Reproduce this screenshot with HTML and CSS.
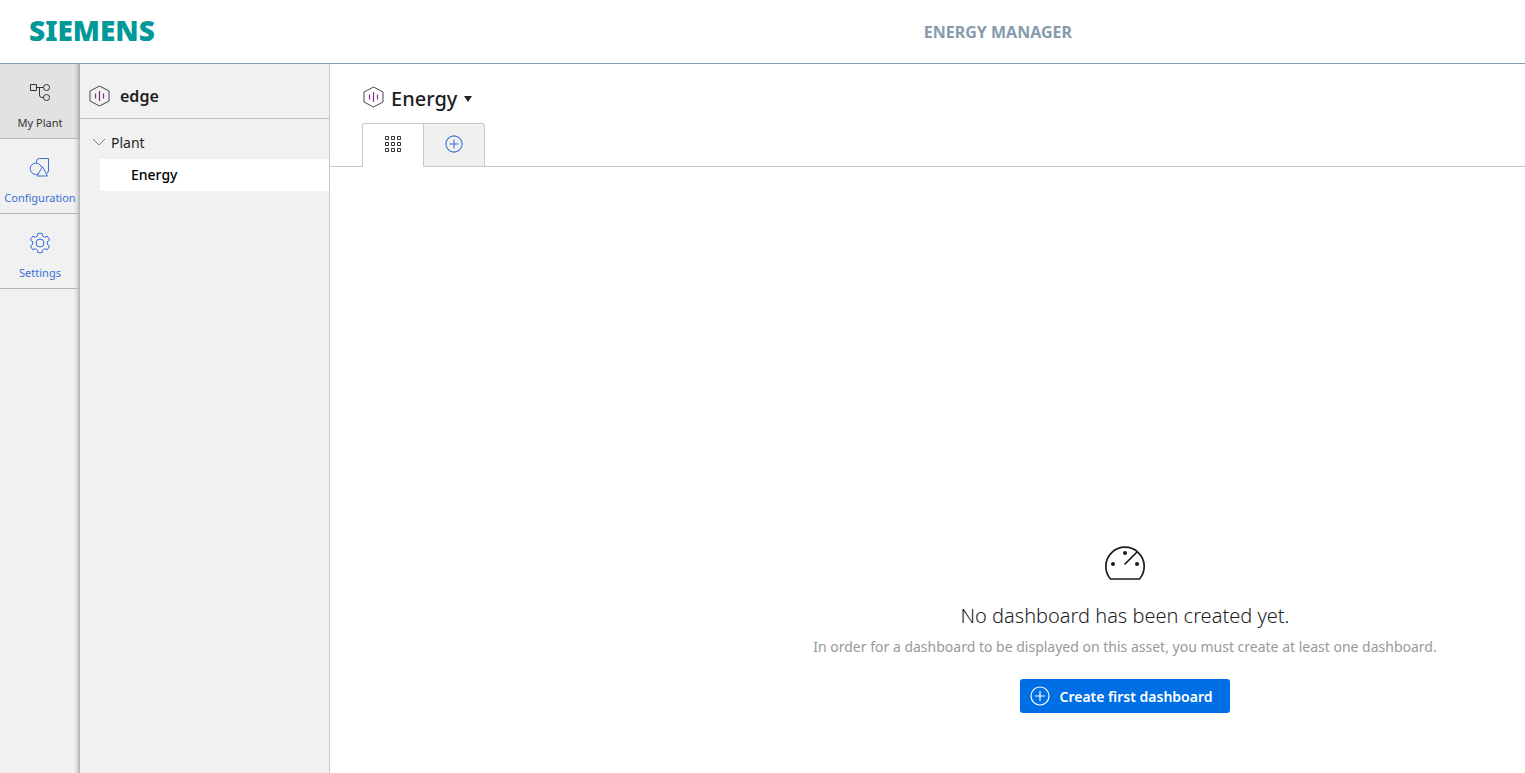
FILE: index.html
```html
<!DOCTYPE html>
<html lang="en">
<head>
<meta charset="utf-8">
<title>Energy Manager</title>
<link rel="stylesheet" href="styles.css">
</head>
<body>
<svg class="symbols" aria-hidden="true">
  <symbol id="asset" viewBox="0 0 22 22">
    <path d="M11.500 1 21 6V16L11.500 21 2 16V6Z" fill="none" stroke="#4b4452"/>
    <path d="M11.500 6V16M7.500 8.500V13.500M15.500 8.500V13.500" fill="none" stroke="#7a3380" stroke-width="1.200"/>
  </symbol>
  <symbol id="plus" viewBox="0 0 20 20">
    <path d="M10 1a9 9 0 1 0 0 18 9 9 0 1 0 0-18M10 5v10M5 10h10" fill="none" stroke="currentColor" stroke-width="1.200"/>
  </symbol>
</svg>
<div class="app">
  <header class="header">
    <a class="brand" href="#">SIEMENS</a>
    <div class="product">ENERGY MANAGER</div>
  </header>
  <div class="body">
    <nav class="rail">
      <a class="rail-item active" href="#">
        <svg class="rail-icon" viewBox="0 0 22 22" fill="none" stroke="currentColor"><path d="M1.500 2.500h6v6h-6zM7.500 5.500h7M10.500 5.500V13q0 2.500 2.500 2.500h1.500"/><circle cx="17.500" cy="5.500" r="3"/><circle cx="17.500" cy="15.500" r="3"/></svg>
        <span>My Plant</span>
      </a>
      <a class="rail-item" href="#">
        <svg class="rail-icon" viewBox="0 0 22 22" fill="none" stroke="currentColor" stroke-linejoin="round"><path d="M7.500 6V4.500q0-3 3-3h9V13q0 3-2 3.500M9.500 16.800A5.700 5.700 0 1 1 12.300 10M13.500 9.500l5 9.500h-10.500Z"/></svg>
        <span>Configuration</span>
      </a>
      <a class="rail-item" href="#">
        <svg class="rail-icon" viewBox="0 0 22 22" fill="none" stroke="currentColor" stroke-linejoin="round"><path d="M8.800 1.300H13.200L13.400 3.900 15.900 5.300 18.300 4.200 20.600 8.100 18.400 9.600V12.400L20.600 13.900 18.300 17.800 15.900 16.700 13.400 18.100 13.200 20.700H8.800L8.600 18.100 6.100 16.700 3.700 17.800 1.400 13.900 3.600 12.400V9.600L1.400 8.100 3.700 4.200 6.100 5.300 8.600 3.900Z"/><circle cx="11" cy="11" r="4"/></svg>
        <span>Settings</span>
      </a>
    </nav>
    <aside class="tree">
      <div class="tree-head"><svg class="asset"><use href="#asset"/></svg><span>edge</span></div>
      <button class="node" type="button"><svg class="chevron" viewBox="0 0 14 8"><path d="M1 1 7 7 13 1" fill="none" stroke="#808080"/></svg>Plant</button>
      <button class="leaf" type="button">Energy</button>
    </aside>
    <main class="main">
      <div class="title"><svg class="asset"><use href="#asset"/></svg><h1>Energy</h1>
        <button class="more" type="button" aria-label="Asset menu"><svg class="caret" viewBox="0 0 8 6"><path d="M0 0h8L4 6Z" fill="#222"/></svg></button>
      </div>
      <div class="tabs">
        <button class="tab selected" type="button" aria-label="Dashboards">
          <svg class="grid-icon" viewBox="0 0 18 18" fill="none" stroke="#333"><path d="M1.500 1.500h3v3h-3zM7.500 1.500h3v3h-3zM13.500 1.500h3v3h-3zM1.500 7.500h3v3h-3zM7.500 7.500h3v3h-3zM13.500 7.500h3v3h-3zM1.500 13.500h3v3h-3zM7.500 13.500h3v3h-3zM13.500 13.500h3v3h-3z"/></svg>
        </button>
        <button class="tab" type="button" aria-label="Add dashboard"><svg class="tab-plus" viewBox="0 0 20 20"><use href="#plus"/></svg></button>
      </div>
      <section class="empty">
        <svg class="gauge" viewBox="0 0 42 36" fill="none" stroke="#1a1a1a" stroke-width="1.700"><path d="M6.500 34A19.200 19.200 0 1 1 35.500 34ZM20.500 19.500 33 7"/><g fill="#1a1a1a" stroke="none"><circle cx="21" cy="8" r="2"/><circle cx="9" cy="19" r="2"/><circle cx="33" cy="19" r="2"/></g></svg>
        <h2>No dashboard has been created yet.</h2>
        <p>In order for a dashboard to be displayed on this asset, you must create at least one dashboard.</p>
        <button class="create" type="button"><svg class="create-plus"><use href="#plus"/></svg>Create first dashboard</button>
      </section>
    </main>
  </div>
</div>
</body>
</html>
```
FILE: styles.css
```css
* { box-sizing: border-box; }
body { margin: 0; font-family: "Noto Sans", "Open Sans", sans-serif; color: #1e1e1e; background: #fff; }
button { font: inherit; color: inherit; border: 0; padding: 0; background: none; cursor: pointer; }
a { text-decoration: none; }
svg { display: block; flex: none; }
.symbols { width: 0; height: 0; position: absolute; }
.app { display: flex; flex-direction: column; min-height: 100vh; }
.header { display: flex; align-items: center; height: 64px; padding-left: 29px; border-bottom: 1px solid #879baa; }
.brand { padding-bottom: 3px; color: #099; font-size: 28px; font-weight: 900; line-height: 32px; }
.product { flex: 1; padding-left: 316px; text-align: center; color: #879baa; font-size: 16px; font-weight: 700; line-height: 24px; }
.body { flex: 1; display: flex; }
.rail { width: 80px; flex: none; background: linear-gradient(to left, #b0b0b0, #dcdcdc 3px, #f1f1f1 6px); }
.rail-item { display: flex; flex-direction: column; align-items: center; height: 75px; padding-top: 18px; gap: 11px; border-bottom: 1px solid #b4b4b4; color: #3a6fd8; font-size: 11px; line-height: 16px; }
.rail-item.active { color: #333; background: linear-gradient(to left, #a8a8a8, #cecece 3px, #e2e2e2 6px); }
.rail-icon { width: 22px; height: 22px; }
.tree { width: 250px; flex: none; background: #f1f1f1; border-right: 1px solid #c8c8c8; }
.tree-head { display: flex; align-items: center; gap: 10px; height: 55px; padding: 9px 0 0 8px; border-bottom: 1px solid #bebebe; font-size: 16px; font-weight: 600; }
.asset { width: 22px; height: 22px; }
.node { display: flex; align-items: center; gap: 5px; width: 100%; height: 32px; margin: 7px 0 1px; padding-left: 12px; font-size: 14px; }
.chevron { width: 14px; height: 8px; }
.leaf { display: block; width: 229px; height: 32px; margin-left: 20px; padding: 0 0 2px 31px; background: #fff; text-align: left; font-size: 14px; font-weight: 500; color: #000; }
.main { flex: 1; min-width: 0; }
.title { display: flex; align-items: center; gap: 7px; height: 59px; padding: 11px 0 0 32px; }
.title .asset { margin-bottom: 4px; }
.title h1 { margin: 0; font-size: 20px; line-height: 28px; font-weight: 500; }
.caret { width: 8px; height: 6px; }
.tabs { display: flex; height: 44px; padding-left: 32px; border-bottom: 1px solid #c8c8c8; }
.tab { display: grid; place-items: center; width: 62px; height: 44px; padding-bottom: 2px; border: 1px solid #c8c8c8; border-radius: 0 3px 0 0; background: #f0f0f0; color: #3a6fd8; }
.tab.selected { border-bottom-color: #fff; border-radius: 3px 0 0 0; background: #fff; }
.tab + .tab { border-left: 0; width: 61px; }
.grid-icon { width: 18px; height: 18px; }
.tab-plus { width: 18px; height: 18px; }
.empty { display: flex; flex-direction: column; align-items: center; padding: 378px 0 60px 395px; text-align: center; }
.gauge { width: 42px; height: 36px; }
.empty h2 { margin: 19px 0 0; font-size: 20px; line-height: 32px; font-weight: 300; }
.empty p { margin: 5px 0 0; font-size: 14px; line-height: 20px; color: #999; }
.create { display: flex; align-items: center; gap: 9px; height: 34px; margin-top: 22px; padding: 0 17px 0 10px; border-radius: 3px; background: #006fe6; color: #fff; font-size: 14px; font-weight: 600; }
.create-plus { width: 20px; height: 20px; }
```
